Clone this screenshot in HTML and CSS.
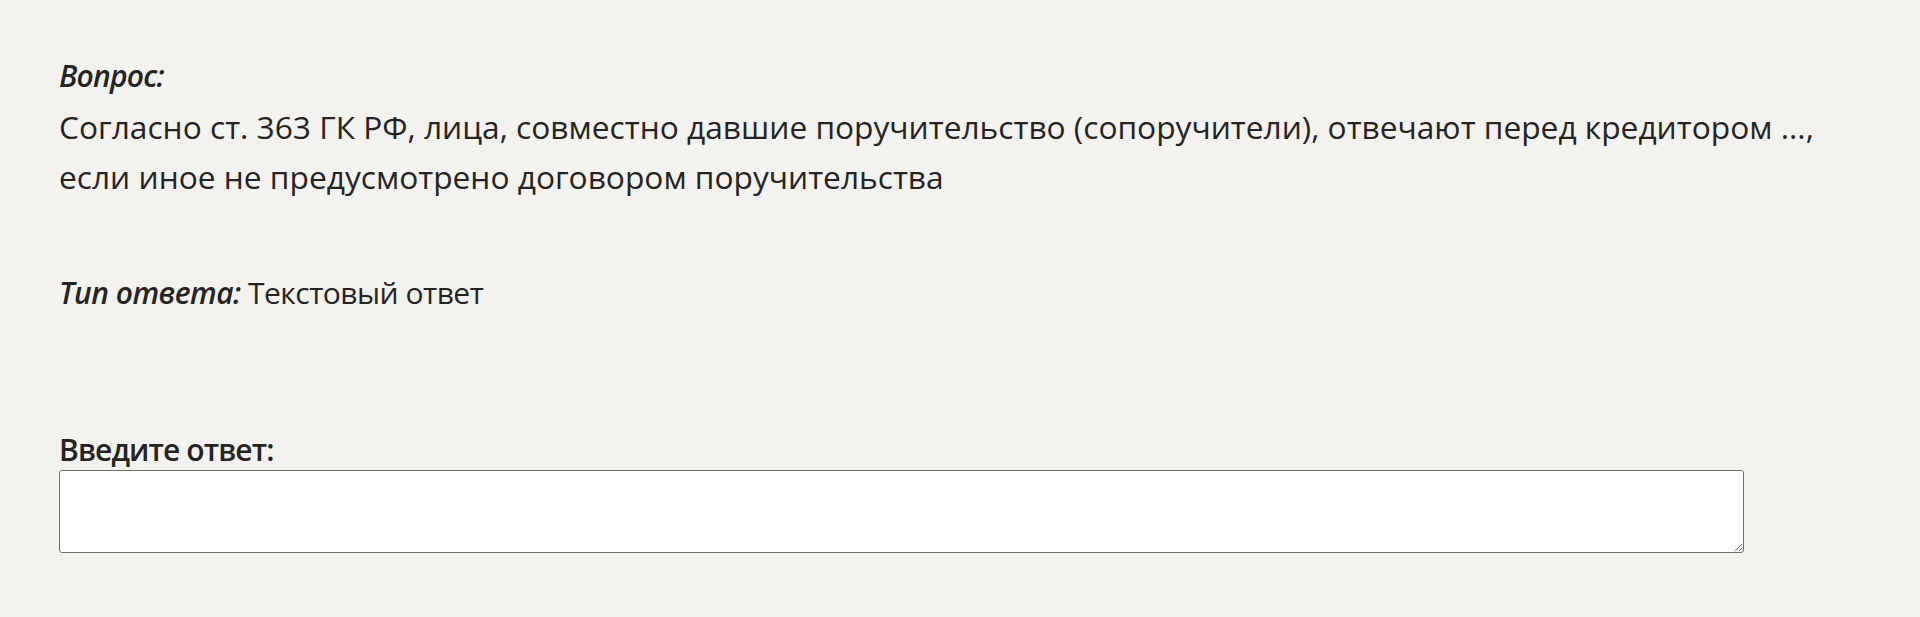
FILE: index.html
```html
<!DOCTYPE html>
<html lang="ru">
<head>
    <meta charset="UTF-8">
    <meta name="viewport" content="width=device-width, initial-scale=1.0">
    <title>Вопрос</title>
    <link rel="stylesheet" href="styles.css">
</head>
<body class="content">
    <div class="task">
        <div class="question">
            <div class="lbl">Вопрос:</div>
            <p class="qtext">Согласно ст. 363 ГК РФ, лица, совместно давшие поручительство (сопоручители), отвечают перед кредитором ..., если иное не предусмотрено договором поручительства</p>
        </div>
        <div class="type">
            <span class="lbl">Тип ответа:</span> Текстовый ответ
        </div>
        <form action="#" class="answer">
            <label class="anslbl" for="answer">Введите ответ:</label>
            <textarea class="frm" id="answer" name="answer"></textarea>
        </form>
    </div>
</body>
</html>
```

FILE: styles.css
```css
body{
    margin: 0;
    background: #f3f2ef;
    color: #252423;
    font-family: "Open Sans", "Noto Sans", sans-serif;
    font-size: 30px;
    line-height: 50px;
    letter-spacing: -0.75px;
}
.task{
    padding: 51px 100px 0 59px;
}
.lbl{
    font-weight: 600;
    font-style: italic;
}
.question .lbl{
    margin-bottom: 1px;
}
.qtext{
    margin: 0;
    font-size: 31.7px;
    letter-spacing: 0;
}
.type{
    margin-top: 66px;
    letter-spacing: -0.5px;
}
.answer{
    margin-top: 112px;
    display: flex;
    flex-direction: column;
}
.anslbl{
    font-weight: 600;
    line-height: 40px;
    letter-spacing: -0.9px;
}
.frm{
    width: 1685px;
    height: 83px;
    box-sizing: border-box;
    border: 1px solid #6f6f6f;
    border-radius: 3px;
    background: white;
    margin: 0;
    padding: 2px;
    font: inherit;
}
```
